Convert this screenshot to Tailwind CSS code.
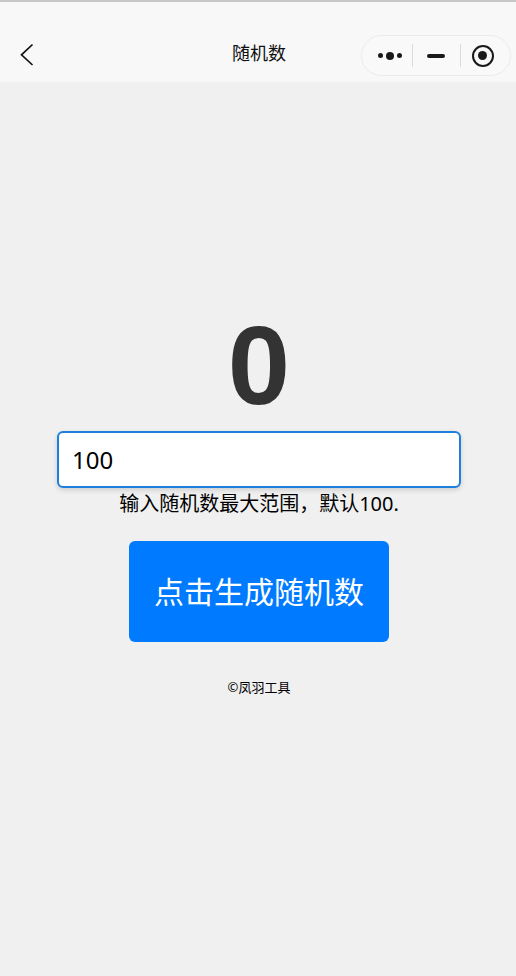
<!DOCTYPE html>
<html lang="zh-CN">
<head>
<meta charset="utf-8">
<script src="https://cdn.jsdelivr.net/npm/@tailwindcss/browser@4"></script>
</head>
<body class="m-0">
<div class="w-[516px] h-[976px] overflow-hidden flex flex-col bg-[#f0f0f0] text-black font-['Noto_Sans','Noto_Sans_CJK_SC',sans-serif]">
  <div class="h-[2px] shrink-0 bg-[#c8c8c8]"></div>
  <header class="h-[80px] shrink-0 bg-[#f8f8f8] relative flex items-center justify-center pt-[25px]">
    <svg class="absolute left-[19px] top-[41px]" width="16" height="24" viewBox="0 0 16 24" fill="none" stroke="#111" stroke-width="1.7"><path d="M13.5 1.5 L2.5 11.8 L13.5 22"/></svg>
    <span class="text-[18px] leading-[24px] text-[#111] translate-x-[1px] -translate-y-[2px]">随机数</span>
    <div class="absolute left-[361px] top-[33px] w-[150px] h-[41px] rounded-full border border-[#ebebeb] bg-[#f9f9f9] flex items-center">
      <div class="w-[50px] flex items-center justify-center gap-[3px] pl-[5px]">
        <span class="w-[5px] h-[5px] rounded-full bg-[#1a1a1a]"></span>
        <span class="w-[8px] h-[8px] rounded-full bg-[#1a1a1a]"></span>
        <span class="w-[5px] h-[5px] rounded-full bg-[#1a1a1a]"></span>
      </div>
      <div class="w-px h-[23px] bg-[#dcdcdc]"></div>
      <div class="w-[47px] flex justify-center pr-[2px]"><span class="w-[18px] h-[4px] rounded-full bg-[#1a1a1a]"></span></div>
      <div class="w-px h-[23px] bg-[#dcdcdc]"></div>
      <div class="flex-1 flex justify-center pr-[6px]">
        <span class="w-[22px] h-[22px] rounded-full border-[2.5px] border-[#1a1a1a] flex items-center justify-center"><span class="w-[9px] h-[9px] rounded-full bg-[#1a1a1a]"></span></span>
      </div>
    </div>
  </header>
  <main class="flex flex-col items-center pt-[225px] pl-[2px]">
    <div class="text-[112px] leading-[122px] font-bold text-[#333] font-['Liberation_Sans',sans-serif] -translate-y-[2px]">0</div>
    <input value="100" class="mt-[2px] w-[404px] h-[57px] box-border bg-white border-2 border-[#1f7fdc] rounded-[6px] px-[13px] text-[24px] text-black shadow-[0_2px_5px_rgba(0,0,0,0.15)] outline-none">
    <p class="text-[20px] leading-[30px] mt-px">输入随机数最大范围，默认100.</p>
    <button class="mt-[22px] w-[260px] h-[101px] bg-[#007bff] text-white rounded-[6px] text-[30px] leading-none">点击生成随机数</button>
    <p class="mt-[35px] text-[13px] leading-[20px]">©凤羽工具</p>
  </main>
</div>
</body>
</html>
